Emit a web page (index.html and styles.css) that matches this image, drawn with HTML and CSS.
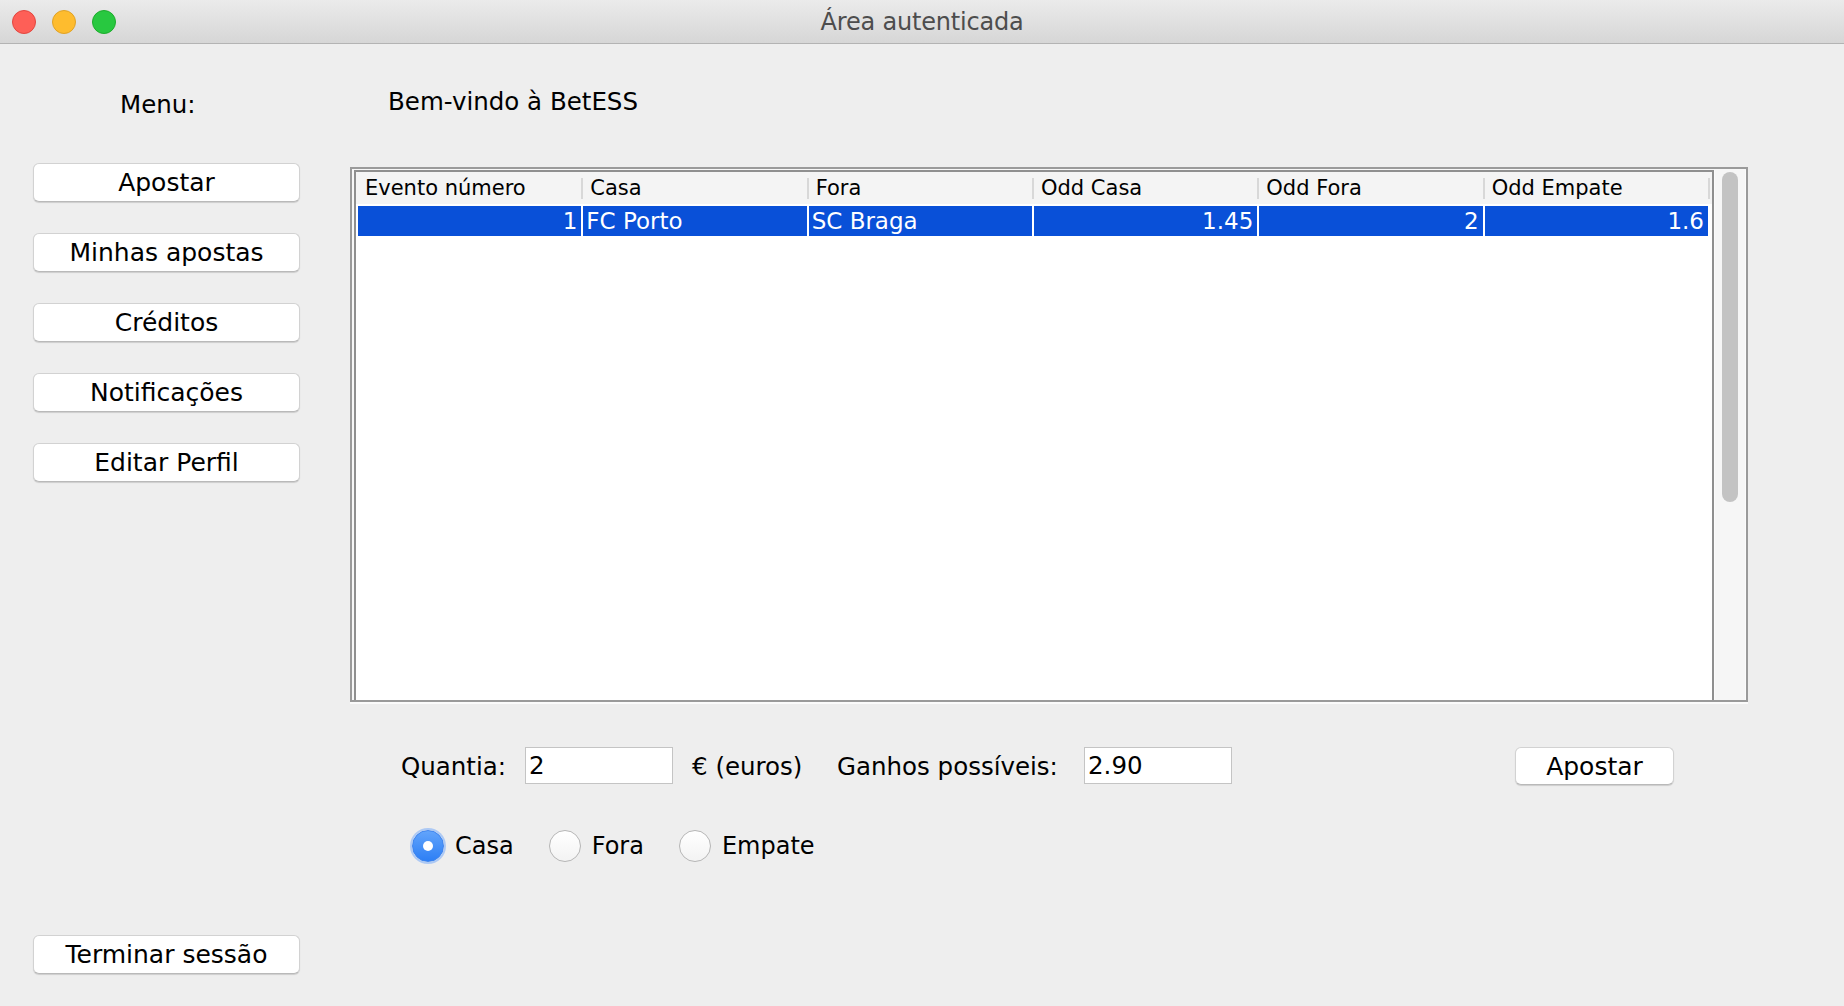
FILE: index.html
```html
<!DOCTYPE html>
<html lang="pt">
<head>
<meta charset="utf-8">
<title>Área autenticada</title>
<link rel="stylesheet" href="styles.css">
</head>
<body>
<div class="window">
  <header class="titlebar">
    <div class="lights">
      <span class="light red"></span>
      <span class="light yellow"></span>
      <span class="light green"></span>
    </div>
    <div class="title">Área autenticada</div>
    <div class="spacer"></div>
  </header>
  <main class="main">
    <nav class="nav">
      <div class="menu-label">Menu:</div>
      <button class="btn nav-btn first">Apostar</button>
      <button class="btn nav-btn">Minhas apostas</button>
      <button class="btn nav-btn">Créditos</button>
      <button class="btn nav-btn">Notificações</button>
      <button class="btn nav-btn">Editar Perfil</button>
      <button class="btn nav-btn logout">Terminar sessão</button>
    </nav>
    <section class="content">
      <div class="welcome">Bem-vindo à BetESS</div>
      <div class="scrollpane">
        <div class="viewport">
          <div class="thead">
            <div class="th">Evento número</div>
            <div class="th">Casa</div>
            <div class="th">Fora</div>
            <div class="th">Odd Casa</div>
            <div class="th">Odd Fora</div>
            <div class="th">Odd Empate</div>
          </div>
          <div class="trow selected">
            <div class="td num">1</div>
            <div class="td">FC Porto</div>
            <div class="td">SC Braga</div>
            <div class="td num">1.45</div>
            <div class="td num">2</div>
            <div class="td num">1.6</div>
          </div>
        </div>
        <div class="vscroll"><div class="thumb"></div></div>
      </div>
      <div class="form-row">
        <span class="lbl lbl-quantia">Quantia:</span>
        <input class="field" type="text" value="2">
        <span class="lbl lbl-euros">€ (euros)</span>
        <span class="lbl lbl-ganhos">Ganhos possíveis:</span>
        <input class="field" type="text" value="2.90">
        <button class="btn bet-btn">Apostar</button>
      </div>
      <div class="radio-row">
        <label class="radio"><span class="dot checked"></span>Casa</label>
        <label class="radio"><span class="dot"></span>Fora</label>
        <label class="radio"><span class="dot"></span>Empate</label>
      </div>
    </section>
  </main>
</div>
</body>
</html>
```

FILE: styles.css
```css
* { box-sizing: border-box; }
html, body { margin: 0; padding: 0; }
body {
  width: 1844px;
  height: 1006px;
  overflow: hidden;
  background: #eeeeee;
  font-family: "DejaVu Sans", "Liberation Sans", sans-serif;
  color: #000;
}
.window { display: flex; flex-direction: column; height: 1006px; }

/* title bar */
.titlebar {
  height: 44px;
  flex: none;
  display: grid;
  grid-template-columns: 1fr auto 1fr;
  align-items: center;
  background: linear-gradient(#ebebeb, #d6d6d6);
  border-bottom: 1px solid #b3b3b3;
}
.lights { display: flex; gap: 16px; padding-left: 12px; }
.light { width: 24px; height: 24px; border-radius: 50%; }
.red { background: #fe5f57; border: 1px solid #e2463f; }
.yellow { background: #febc2e; border: 1px solid #e0a226; }
.green { background: #28c840; border: 1px solid #1dac2c; }
.title { font-size: 24px; color: #4d4d4d; letter-spacing: -0.2px; }

/* main */
.main { flex: 1; display: flex; }
.nav {
  width: 350px;
  flex: none;
  display: flex;
  flex-direction: column;
  align-items: flex-start;
  padding: 0 0 32px 33px;
}
.menu-label {
  margin: 46px 0 0 87px;
  font-size: 24.5px;
  line-height: 30px;
  height: 30px;
}
.btn {
  font-family: "DejaVu Sans", "Liberation Sans", sans-serif;
  font-size: 25px;
  color: #000;
  background: #fff;
  border: 1px solid #d2d2d2;
  border-bottom-color: #b9b9b9;
  border-radius: 6px;
  box-shadow: 0 1px 1px rgba(0, 0, 0, 0.14);
  padding: 0;
  line-height: 1;
}
.nav-btn { width: 267px; height: 39px; margin-bottom: 31px; }
.nav-btn.first { margin-top: 43px; }
.nav-btn.logout { margin-top: auto; margin-bottom: 0; }

/* content */
.content { flex: 1; display: flex; flex-direction: column; }
.welcome {
  margin: 43px 0 0 38px;
  font-size: 24.5px;
  line-height: 30px;
  height: 30px;
}
.scrollpane {
  margin-top: 50px;
  width: 1398px;
  height: 535px;
  display: flex;
  border: 2px solid #9a9a9a;
  padding: 1px 0 0 2px;
  background: #f7f7f7;
  box-shadow: 0 2px 0 #fbfbfb;
}
.viewport {
  width: 1360px;
  flex: none;
  background: #fff;
  border: 2px solid #8f8f8f;
  border-bottom: 0;
}
.thead {
  height: 32px;
  background: #f4f4f4;
  padding-left: 2px;
  display: grid;
  grid-template-columns: repeat(6, 225.33px);
  align-items: center;
}
.th {
  height: 32px;
  line-height: 32px;
  font-size: 21px;
  padding-left: 7px;
  white-space: nowrap;
  background: linear-gradient(#d8d8d8, #d8d8d8) no-repeat right center / 2px 21px;
}
.trow {
  margin-top: 2px;
  margin-left: 2px;
  width: 1350px;
  height: 30px;
  display: grid;
  grid-template-columns: repeat(6, 1fr);
  column-gap: 2px;
}
.td {
  font-size: 23px;
  line-height: 30px;
  padding: 0 3px;
  white-space: nowrap;
}
.trow.selected .td { background: #0950d8; color: #fff; }
.td.num { text-align: right; padding-right: 4px; }

.vscroll {
  flex: 1;
  background: #f6f6f6;
  border-left: 1px solid #fbfbfb;
  border-right: 1px solid #fbfbfb;
  display: flex;
  justify-content: center;
  padding-top: 2px;
}
.thumb {
  width: 16px;
  height: 330px;
  border-radius: 8px;
  background: #c3c3c3;
}

/* form */
.form-row {
  margin-top: 45px;
  height: 39px;
  display: flex;
  align-items: center;
  padding-left: 51px;
}
.lbl { font-size: 24.5px; white-space: nowrap; }
.lbl-quantia { width: 124px; }
.lbl-euros { width: 145px; margin-left: 19px; }
.lbl-ganhos { width: 247px; }
.field {
  width: 148px;
  height: 37px;
  margin: 0 0 2px;
  border: 1px solid #c4c4c4;
  background: #fff;
  font-family: "DejaVu Sans", "Liberation Sans", sans-serif;
  font-size: 24.5px;
  color: #000;
  padding: 0 0 0 3px;
  outline: none;
}
.bet-btn { width: 159px; height: 38px; margin-left: 283px; margin-bottom: 1px; }

.radio-row {
  margin-top: 43px;
  height: 34px;
  display: flex;
  align-items: center;
  padding-left: 62px;
  gap: 35px;
}
.radio {
  display: flex;
  align-items: center;
  gap: 11px;
  font-size: 24px;
}
.dot {
  width: 32px;
  height: 32px;
  border-radius: 50%;
  border: 1px solid #b6b6b6;
  background: linear-gradient(#ffffff, #f3f3f3);
  display: flex;
  align-items: center;
  justify-content: center;
}
.dot.checked {
  border: 1px solid #3d84ef;
  background: linear-gradient(#62a4fb, #2d7ff5);
  box-shadow: 0 0 0 2px rgba(120, 172, 250, 0.55);
}
.dot.checked::before {
  content: "";
  width: 10px;
  height: 10px;
  border-radius: 50%;
  background: #fff;
}
```
